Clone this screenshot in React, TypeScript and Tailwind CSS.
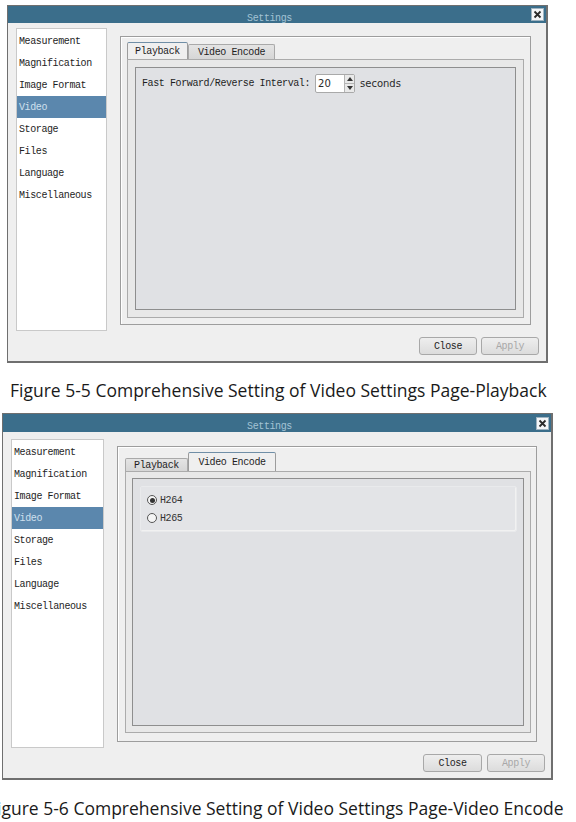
import React from "react";

const mono = "font-['Liberation_Mono',monospace] text-[10px] tracking-[-0.4px]";

const menu = [
  "Measurement",
  "Magnification",
  "Image Format",
  "Video",
  "Storage",
  "Files",
  "Language",
  "Miscellaneous",
];

function TitleBar({ height }: { height: string }) {
  return (
    <div className={`flex items-center bg-[#3b6e8b] ${height}`}>
      <div className="flex-1 text-center">
        <span className={`${mono} text-[#a3c3d5]`}>Settings</span>
      </div>
      <div className="mr-[2px] flex h-[13px] w-[13px] items-center justify-center border border-[#9fb3c0] bg-[#f4f6f8]">
        <svg width="9" height="9" viewBox="0 0 9 9">
          <path d="M1.5 1.5 L7.5 7.5 M7.5 1.5 L1.5 7.5" stroke="#2a2a2a" strokeWidth="1.8" />
        </svg>
      </div>
    </div>
  );
}

function SideList({ className }: { className: string }) {
  return (
    <div className={`flex flex-col border border-[#c9c9c9] bg-white pt-[1px] ${className}`}>
      {menu.map((item) => (
        <div
          key={item}
          className={`flex h-[22px] items-center pl-[2px] ${mono} ${
            item === "Video" ? "bg-[#5b87ad] text-[#cfe0ee]" : "text-[#1e1e1e]"
          }`}
        >
          {item}
        </div>
      ))}
    </div>
  );
}

function Tab({
  label,
  active,
  className,
}: {
  label: string;
  active: boolean;
  className: string;
}) {
  return (
    <div
      className={`flex items-center justify-center rounded-t-[2px] border border-b-0 ${mono} text-[#1e1e1e] ${
        active
          ? "border-[#9c9c9c] border-t-[#6f8ea6] bg-[#efefef]"
          : "border-[#a9a9a9] bg-gradient-to-b from-[#e4e4e4] to-[#d6d6d6]"
      } ${className}`}
    >
      {label}
    </div>
  );
}

function Btn({ label, disabled, className }: { label: string; disabled?: boolean; className: string }) {
  return (
    <div
      className={`flex items-center justify-center rounded-[3px] border border-[#a8a8a8] bg-gradient-to-b from-[#eeeeee] to-[#dcdcdc] ${mono} ${
        disabled ? "text-[#a8a8a8]" : "text-[#1e1e1e]"
      } ${className}`}
    >
      {label}
    </div>
  );
}

function SpinBox() {
  return (
    <div className="flex h-[19px] items-stretch rounded-[2px] border border-[#a9a9a9] bg-white">
      <div className="flex w-[28px] items-center pl-[2px] font-['DejaVu_Sans',sans-serif] text-[10px] text-[#2a2a2a]">
        20
      </div>
      <div className="flex w-[10px] flex-col border-l border-[#b5b5b5] bg-[#e9e9e9]">
        <div className="flex flex-1 items-center justify-center border-b border-[#b5b5b5]">
          <svg width="6" height="4" viewBox="0 0 6 4">
            <path d="M0 4 L3 0 L6 4 Z" fill="#333" />
          </svg>
        </div>
        <div className="flex flex-1 items-center justify-center">
          <svg width="6" height="4" viewBox="0 0 6 4">
            <path d="M0 0 L6 0 L3 4 Z" fill="#333" />
          </svg>
        </div>
      </div>
    </div>
  );
}

function Radio({ checked, label }: { checked: boolean; label: string }) {
  return (
    <div className="flex h-[18px] items-center gap-[3px]">
      <div className="flex h-[10px] w-[10px] items-center justify-center rounded-full border border-[#555] bg-[#f5f5f5]">
        {checked && <div className="h-[5px] w-[5px] rounded-full bg-[#333]" />}
      </div>
      <span className={`${mono} text-[#333]`}>{label}</span>
    </div>
  );
}

function PlaybackDialog() {
  return (
    <div className="flex h-[358px] w-[541px] flex-col border border-b-2 border-r-2 border-[#6f6f6f] bg-[#efefef]">
      <TitleBar height="h-[17px]" />
      <div className="flex items-start pl-[8px]">
        <SideList className="mt-[5px] h-[303px] w-[91px]" />
        <div className="ml-[13px] mt-[13px] flex h-[289px] w-[411px] flex-col border border-[#9d9d9d] px-[6px] pt-[5px] shadow-[inset_1px_1px_0_#fff]">
          <div className="flex items-end">
            <Tab label="Playback" active className="h-[17px] w-[61px]" />
            <Tab label="Video Encode" active={false} className="h-[15px] w-[87px]" />
          </div>
          <div className="flex h-[259px] w-[397px] flex-col border border-[#ababab] bg-[#e8e8e8] p-[7px]">
            <div className="flex h-full flex-col border border-[#8e8e8e] bg-[#e0e1e4] pl-[6px] pt-[6px]">
              <div className="flex items-center">
                <span className={`${mono} text-[#1e1e1e]`}>Fast Forward/Reverse Interval:</span>
                <div className="ml-[5px]">
                  <SpinBox />
                </div>
                <span className="ml-[5px] font-['DejaVu_Sans',sans-serif] text-[10px] text-[#2a2a2a]">seconds</span>
              </div>
            </div>
          </div>
        </div>
      </div>
      <div className="mb-[6px] mt-auto flex justify-end gap-[4px] pr-[7px]">
        <Btn label="Close" className="h-[18px] w-[58px]" />
        <Btn label="Apply" disabled className="h-[18px] w-[58px]" />
      </div>
    </div>
  );
}

function EncodeDialog() {
  return (
    <div className="flex h-[367px] w-[551px] flex-col border border-b-2 border-r-2 border-[#6f6f6f] bg-[#efefef]">
      <TitleBar height="h-[18px]" />
      <div className="flex items-start pl-[8px]">
        <SideList className="mt-[7px] h-[309px] w-[93px]" />
        <div className="ml-[13px] mt-[14px] flex h-[296px] w-[420px] flex-col border border-[#9d9d9d] px-[7px] pt-[5px] shadow-[inset_1px_1px_0_#fff]">
          <div className="flex items-end">
            <Tab label="Playback" active={false} className="h-[13px] w-[63px]" />
            <Tab label="Video Encode" active className="h-[19px] w-[88px]" />
          </div>
          <div className="flex h-[262px] w-[406px] flex-col border border-[#ababab] bg-[#e8e8e8] p-[6px]">
            <div className="flex h-full flex-col border border-[#8e8e8e] bg-[#e0e1e4] pl-[7px] pr-[6px] pt-[7px]">
              <div className="flex h-[46px] flex-col justify-center rounded-[2px] border border-[#e9eaec] bg-[#e3e4e7] pl-[6px] shadow-[inset_-1px_-1px_0_#f1f1f1]">
                <Radio checked label="H264" />
                <Radio checked={false} label="H265" />
              </div>
            </div>
          </div>
        </div>
      </div>
      <div className="mb-[6px] mt-auto flex justify-end gap-[5px] pr-[6px]">
        <Btn label="Close" className="h-[18px] w-[59px]" />
        <Btn label="Apply" disabled className="h-[18px] w-[58px]" />
      </div>
    </div>
  );
}

export default function App() {
  const caption = "font-['Open_Sans',sans-serif] font-normal text-[17.5px] leading-[22px] text-[#1a1a1a] whitespace-nowrap";
  return (
    <div className="h-[822px] w-[576px] overflow-hidden bg-white">
      <div className="pl-[7px] pt-[5px]">
        <PlaybackDialog />
      </div>
      <div className={`ml-[10px] mt-[16px] ${caption}`}>
        Figure 5-5 Comprehensive Setting of Video Settings Page-Playback
      </div>
      <div className="ml-[2px] mt-[12px]">
        <EncodeDialog />
      </div>
      <div className={`-ml-[12px] mt-[17px] ${caption}`}>
        Figure 5-6 Comprehensive Setting of Video Settings Page-Video Encode
      </div>
    </div>
  );
}
